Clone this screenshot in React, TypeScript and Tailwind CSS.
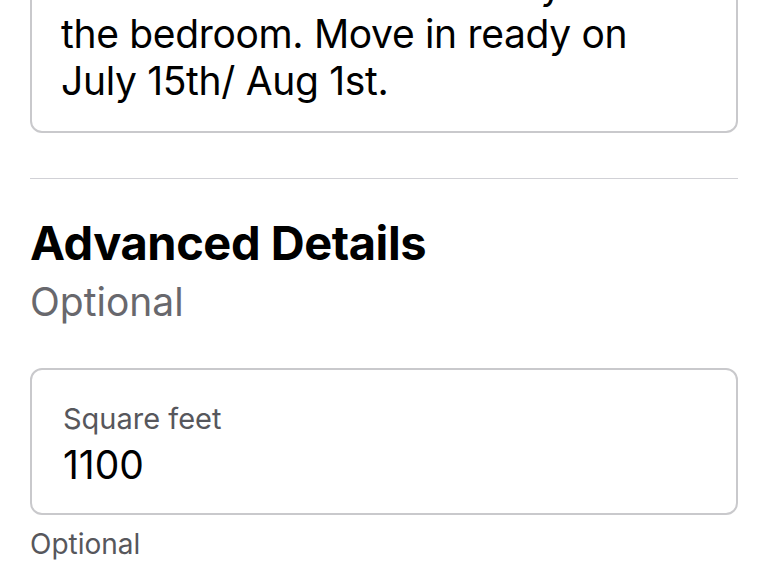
const font = { fontFamily: "Inter, 'Noto Sans', sans-serif" };

export default function App() {
  return (
    <div
      className="w-[768px] h-[576px] overflow-hidden bg-white text-black"
      style={font}
    >
      <div className="px-[30px]">
        <div className="-mt-[45px] rounded-[12px] border-2 border-[#c9c9cc] px-[29px] pt-[2px] pb-[27px] text-[39px] leading-[47px] tracking-[-0.33px] whitespace-nowrap">
          <div className="leading-[51px]">Hardwood floors and sunny closet in</div>
          <div>the bedroom. Move in ready on</div>
          <div>July 15th/ Aug 1st.</div>
        </div>

        <div className="mt-[45px] h-px bg-[#d1d1d6]" />

        <h2 className="mt-[36px] text-[47px] leading-[56px] font-bold tracking-[-0.45px]">
          Advanced Details
        </h2>
        <p className="mt-[7px] text-[39px] leading-[47px] text-[#68686d]">Optional</p>

        <div className="mt-[43px] h-[147px] rounded-[12px] border-2 border-[#c9c9cc] px-[31px] pt-[31px]">
          <div className="text-[29px] leading-[35px] text-[#57575c]">Square feet</div>
          <div className="mt-[5px] text-[39px] leading-[47px]">1100</div>
        </div>

        <p className="mt-[12px] text-[28px] leading-[34px] text-[#57575c]">Optional</p>
      </div>
    </div>
  );
}
